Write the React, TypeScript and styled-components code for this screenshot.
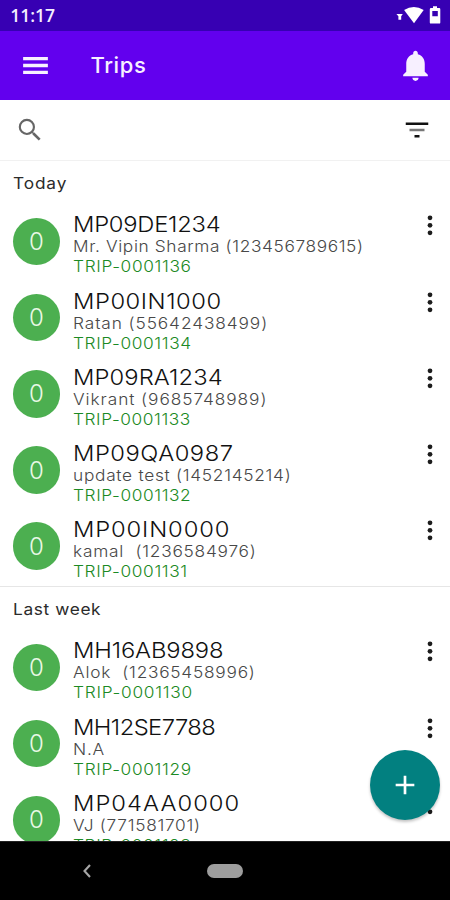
import React from 'react';
import styled, { createGlobalStyle } from 'styled-components';

const GlobalStyle = createGlobalStyle`
  * { box-sizing: border-box; }
  body { margin: 0; background: #fff; }
`;

const Screen = styled.div`
  position: relative;
  display: flex;
  flex-direction: column;
  width: 450px;
  height: 900px;
  overflow: hidden;
  background: #fff;
  font-family: Inter, 'Noto Sans', sans-serif;
`;

const StatusBar = styled.div`
  flex: none;
  display: flex;
  align-items: center;
  justify-content: space-between;
  height: 30.5px;
  padding: 0 8px 0 10.3px;
  background: #3700b3;
  color: #f4efff;
`;

const Clock = styled.span`
  font: 600 17.5px/32px 'Open Sans', sans-serif;
`;

const AppBar = styled.header`
  flex: none;
  display: flex;
  align-items: center;
  height: 69.5px;
  padding: 0 16px 0 19px;
  background: #6200ee;
  color: #f7f0ff;
`;

const AppTitle = styled.h1`
  flex: 1;
  margin: 0 0 0 38.5px;
  font-size: 22px;
  font-weight: 500;
  line-height: 31px;
  letter-spacing: 0.6px;
`;

const SearchBar = styled.div`
  flex: none;
  display: flex;
  align-items: center;
  justify-content: space-between;
  height: 61px;
  padding: 0 18px 0 15px;
  border-bottom: 1.5px solid #f1f1f1;
`;

const Icon = styled.svg<{ $size: number; $color?: string }>`
  flex: none;
  display: block;
  width: ${(p) => p.$size}px;
  height: ${(p) => p.$size}px;
  fill: ${(p) => p.$color ?? 'currentColor'};
`;

const List = styled.main`
  flex: 1;
  min-height: 0;
  overflow: hidden;
`;

const Section = styled.section`
  & + & {
    margin-top: 1.6px;
    border-top: 1px solid #e6e6e6;
  }
`;

const SectionTitle = styled.h2<{ $tracking: number }>`
  height: 42.4px;
  margin: 0;
  padding: 12.4px 0 0 13px;
  font-size: 16px;
  font-weight: 400;
  line-height: 20px;
  letter-spacing: ${(p) => p.$tracking}px;
  color: #2b2b2b;
  transform: scaleX(1.08);
  transform-origin: 13px 0;
`;

const Row = styled.article`
  display: flex;
  align-items: flex-start;
  height: 76.2px;
  padding: 0 5px 0 12.7px;
`;

const Badge = styled.div`
  flex: none;
  display: flex;
  align-items: center;
  justify-content: center;
  width: 47.6px;
  height: 47.6px;
  margin-top: 14.3px;
  border-radius: 50%;
  background: #4caf50;
  color: #e9f8e6;
  font-size: 24px;
  font-weight: 300;
`;

const Details = styled.div`
  flex: 1;
  min-width: 0;
  padding: 9px 0 0 12.4px;
`;

const Line = styled.div<{ $kind: 'plate' | 'driver' | 'trip'; $tracking: number }>`
  white-space: pre;
  font-weight: 300;
  font-size: ${(p) => (p.$kind === 'plate' ? 22 : 16)}px;
  line-height: ${(p) => ({ plate: 24, driver: 21, trip: 18 })[p.$kind]}px;
  color: ${(p) => ({ plate: '#111', driver: '#484848', trip: '#1b8a24' })[p.$kind]};
  letter-spacing: ${(p) => p.$tracking}px;
  transform: scaleX(1.08);
  transform-origin: 0 0;
`;

const MoreButton = styled.button`
  flex: none;
  margin: 7px 0 0;
  padding: 0;
  border: 0;
  background: none;
  color: #1c1c1c;
`;

const Fab = styled.button`
  position: absolute;
  right: 10px;
  bottom: 80px;
  display: flex;
  align-items: center;
  justify-content: center;
  width: 70px;
  height: 70px;
  padding: 0;
  border: 0;
  border-radius: 50%;
  background: #028080;
  color: #fff;
  box-shadow: 0 2px 3px rgba(0, 0, 0, 0.24);
`;

const NavBar = styled.nav`
  flex: none;
  display: grid;
  grid-template-columns: 1fr 36px 1fr;
  align-items: center;
  height: 59.5px;
  border-top: 1px solid #222;
  background: #000;
`;

const BackIcon = styled.svg`
  width: 10px;
  height: 16px;
  margin-left: 82px;
  fill: none;
  stroke: #a6a6a6;
  stroke-width: 2.1;
`;

const HomePill = styled.div`
  height: 14px;
  border-radius: 7px;
  background: #9d9d9d;
`;

type Tracked = [text: string, tracking: number];
interface Trip {
  plate: Tracked;
  driver: Tracked;
  trip: Tracked;
}

const sections: { title: Tracked; trips: Trip[] }[] = [
  {
    title: ['Today', 0.8],
    trips: [
      { plate: ['MP09DE1234', -0.22], driver: ['Mr. Vipin Sharma (123456789615)', 0.58], trip: ['TRIP-0001136', 0.6] },
      { plate: ['MP00IN1000', 0.5], driver: ['Ratan (55642438499)', 0.84], trip: ['TRIP-0001134', 0.57] },
      { plate: ['MP09RA1234', 0.08], driver: ['Vikrant (9685748989)', 0.86], trip: ['TRIP-0001133', 0.54] },
      { plate: ['MP09QA0987', 0.47], driver: ['update test (1452145214)', 0.67], trip: ['TRIP-0001132', 0.56] },
      { plate: ['MP00IN0000', 0.8], driver: ['kamal  (1236584976)', 0.72], trip: ['TRIP-0001131', 0.58] },
    ],
  },
  {
    title: ['Last week', 0.58],
    trips: [
      { plate: ['MH16AB9898', -0.12], driver: ['Alok  (12365458996)', 0.7], trip: ['TRIP-0001130', 0.68] },
      { plate: ['MH12SE7788', -0.52], driver: ['N.A', 0.7], trip: ['TRIP-0001129', 0.6] },
      { plate: ['MP04AA0000', 0.95], driver: ['VJ (771581701)', 0.67], trip: ['TRIP-0001128', 0.56] },
    ],
  },
];

function TripRow({ plate, driver, trip }: Trip) {
  return (
    <Row>
      <Badge>0</Badge>
      <Details>
        <Line $kind="plate" $tracking={plate[1]}>{plate[0]}</Line>
        <Line $kind="driver" $tracking={driver[1]}>{driver[0]}</Line>
        <Line $kind="trip" $tracking={trip[1]}>{trip[0]}</Line>
      </Details>
      <MoreButton aria-label="More">
        <Icon $size={30} viewBox="0 0 24 24">
          <circle cx="12" cy="6.2" r="1.9" />
          <circle cx="12" cy="12.2" r="1.9" />
          <circle cx="12" cy="18.2" r="1.9" />
        </Icon>
      </MoreButton>
    </Row>
  );
}

const StatusIcons = styled.svg`
  display: block;
  width: 46px;
  height: 20px;
  fill: #fff;
`;

export default function App() {
  return (
    <>
      <GlobalStyle />
      <Screen>
        <StatusBar>
          <Clock>11:17</Clock>
          <StatusIcons viewBox="0 0 46 20">
            <path d="M0.4 9H6.8L5.2 11.2V14.8H2.4V11.2Z" />
            <path d="M8.1 5Q17.8 -0.8 27.7 5L18 18.2Z" />
            <path
              fillRule="evenodd"
              d="M37 1.3H41V3H43.2Q44.3 3 44.3 4.2V17.4Q44.3 18.6 43.2 18.6H35Q33.8 18.6 33.8 17.4V4.2Q33.8 3 35 3H37ZM36.3 6V11.2H41.8V6Z"
            />
          </StatusIcons>
        </StatusBar>
        <AppBar>
          <Icon $size={33} viewBox="0 0 24 24">
            <path d="M3 18.2h18v-2.4H3v2.4zm0-5h18v-2.4H3v2.4zm0-7.4v2.4h18V5.800H3z" />
          </Icon>
          <AppTitle>Trips</AppTitle>
          <Icon $size={37} viewBox="0 0 24 24">
            <path d="M12 22c1.1 0 2-.9 2-2h-4c0 1.1.9 2 2 2zm6-6v-5c0-3.07-1.64-5.64-4.5-6.32V4c0-.83-.67-1.5-1.5-1.5s-1.5.67-1.5 1.5v.68C7.63 5.36 6 7.92 6 11v5l-2 2v1h16v-1l-2-2z" />
          </Icon>
        </AppBar>
        <SearchBar>
          <Icon $size={30} $color="#666" viewBox="0 0 24 24">
            <path d="M15.5 14h-.79l-.28-.27A6.47 6.47 0 0 0 16 9.5 6.5 6.5 0 1 0 9.5 16c1.61 0 3.09-.59 4.23-1.57l.27.28v.79l5 4.99L20.49 19l-4.99-5zm-6 .3a4.8 4.8 0 1 1 0-9.600 4.8 4.8 0 0 1 0 9.600z" />
          </Icon>
          <Icon $size={30} viewBox="0 0 24 24">
            <path fill="#111" d="M3 6h18v2H3zM10 16h4v2h-4z" />
            <path fill="#777" d="M6 11h12v2H6z" />
          </Icon>
        </SearchBar>
        <List>
          {sections.map((s) => (
            <Section key={s.title[0]}>
              <SectionTitle $tracking={s.title[1]}>{s.title[0]}</SectionTitle>
              {s.trips.map((t) => (
                <TripRow key={t.trip[0]} {...t} />
              ))}
            </Section>
          ))}
        </List>
        <Fab aria-label="Add">
          <Icon $size={32} viewBox="0 0 24 24">
            <path d="M19 13h-6v6h-2v-6H5v-2h6V5h2v6h6v2z" />
          </Icon>
        </Fab>
        <NavBar>
          <BackIcon viewBox="0 0 10 16">
            <path d="M8 2L2.5 8L8 14" />
          </BackIcon>
          <HomePill />
        </NavBar>
      </Screen>
    </>
  );
}
